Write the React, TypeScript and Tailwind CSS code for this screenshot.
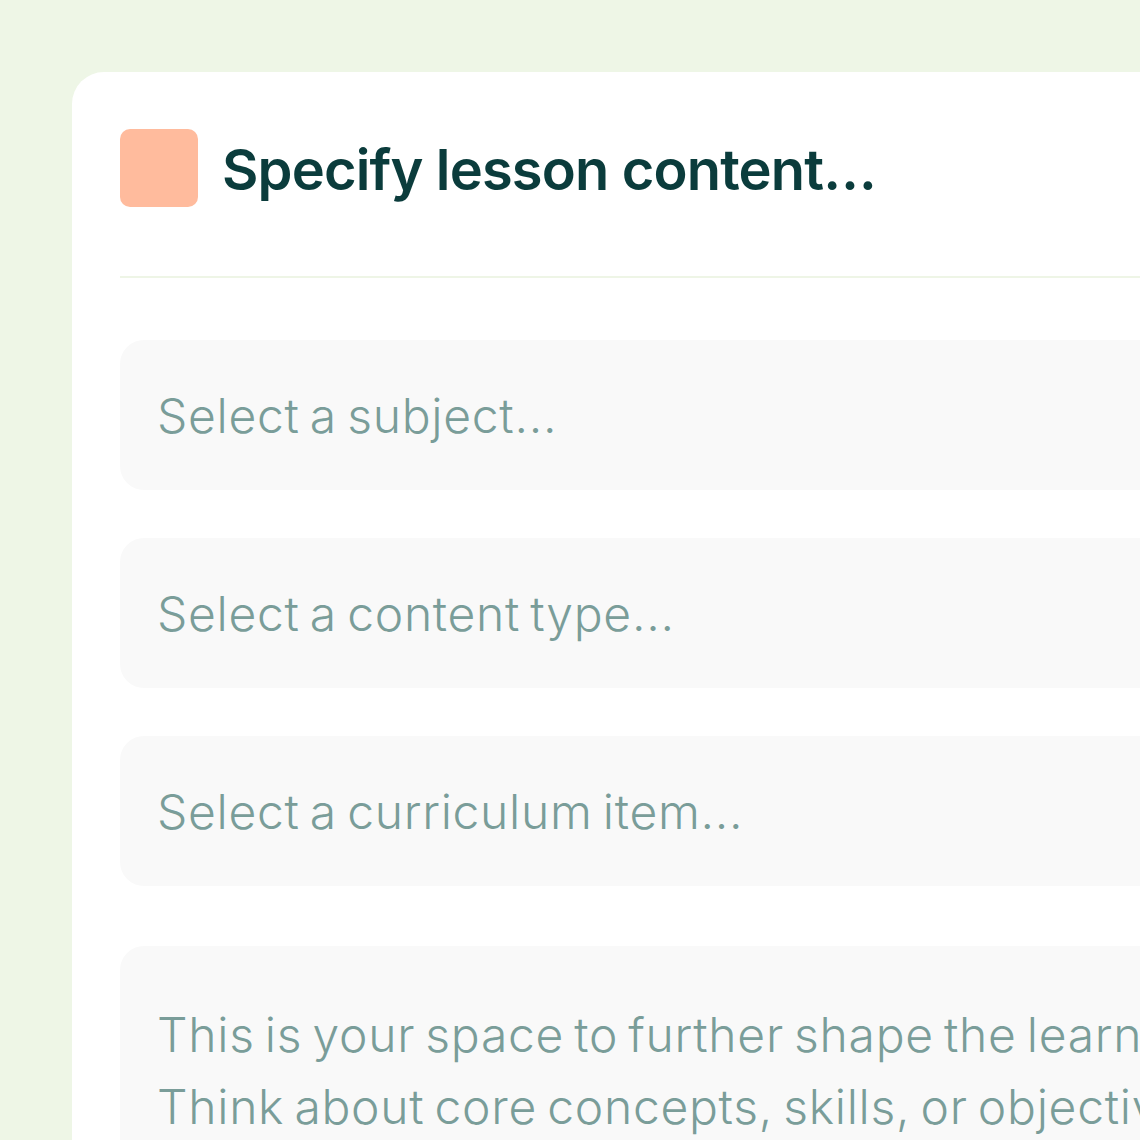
export default function App() {
  const fields = ['Select a subject...', 'Select a content type...', 'Select a curriculum item...'];

  return (
    <div className="h-[1140px] w-[1140px] overflow-hidden bg-[#eef6e6] pl-[72px] pt-[72px] font-['Inter',sans-serif]">
      <div className="w-[1200px] rounded-tl-[32px] bg-white pb-[200px] pl-[48px] pt-[57px]">
        {/* header */}
        <div className="flex h-[78px] items-center gap-[24px]">
          <div className="h-[78px] w-[78px] shrink-0 rounded-[10px] bg-[#ffbb9d]" />
          <h1 className="mt-[4px] whitespace-nowrap text-[56px] font-semibold leading-none tracking-[-0.015em] text-[#0b3c3c]">
            Specify lesson content…
          </h1>
        </div>

        <div className="mt-[69px] h-[2px] bg-[#eef5e6]" />

        {/* selects */}
        <div className="mt-[62px] flex flex-col gap-[48px]">
          {fields.map((f) => (
            <div key={f} className="flex h-[150px] items-center rounded-l-[24px] bg-[#f9f9f9] pl-[37px]">
              <span className="mt-[2px] whitespace-nowrap text-[48px] font-light leading-none tracking-[0.015em] text-[#7a9d99] [word-spacing:-4px]">{f}</span>
            </div>
          ))}
        </div>

        {/* notes */}
        <div className="mt-[60px] h-[400px] rounded-l-[24px] bg-[#f9f9f9] pl-[37px] pt-[53px]">
          <p className="whitespace-nowrap text-[48px] font-light leading-[72px] tracking-[0.015em] text-[#7a9d99] [word-spacing:-4px]">
            This is your space to further shape the learning experience.
            <br />
            Think about core concepts, skills, or objectives you want to cover.
          </p>
        </div>
      </div>
    </div>
  );
}
